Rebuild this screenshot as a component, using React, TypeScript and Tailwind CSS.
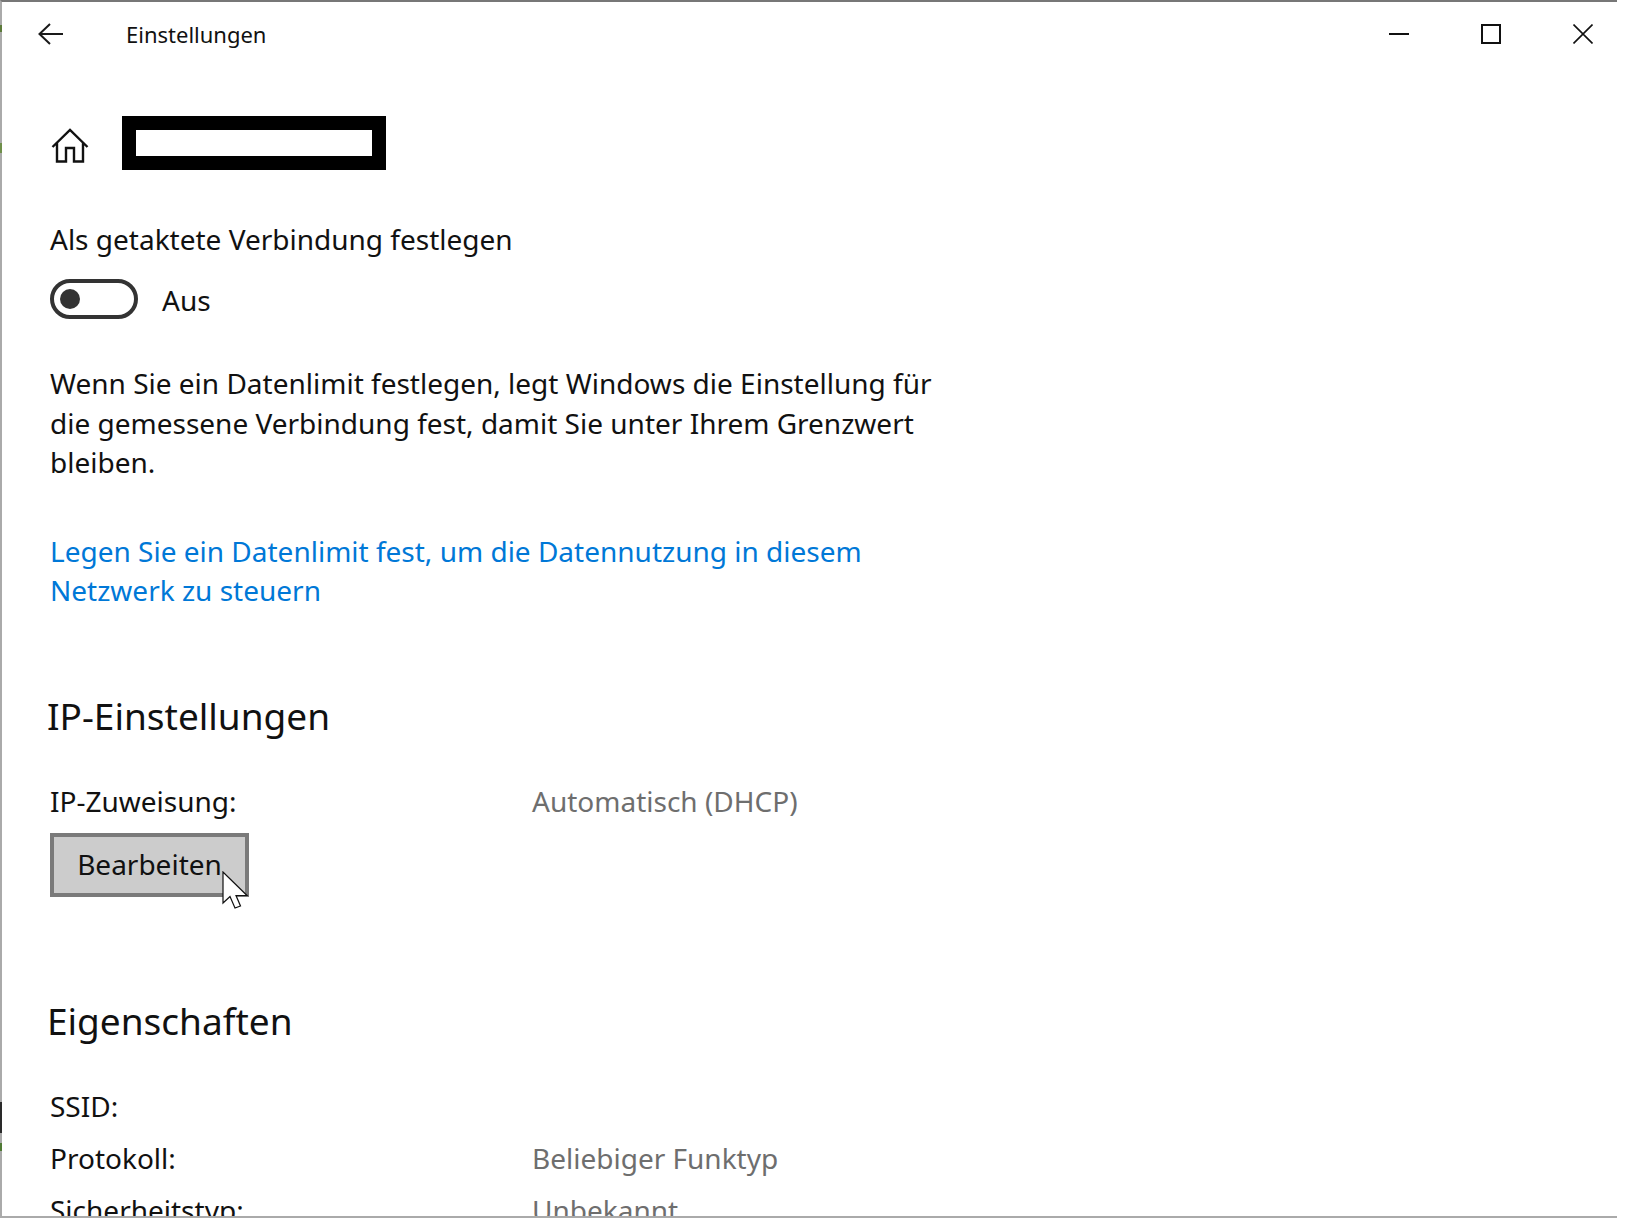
const BODY = "text-[28px] leading-[39.5px]";

function TitleBar() {
  return (
    <div className="flex h-[64px] shrink-0 items-center justify-between">
      <div className="flex items-center">
        <svg width="28" height="24" viewBox="0 0 28 24" className="ml-[35px]" fill="none" stroke="#1a1a1a" strokeWidth="2">
          <path d="M26 12H3M13 2L2.5 12L13 22" />
        </svg>
        <span className="ml-[61px] text-[22px] leading-[32px] text-[#111]">Einstellungen</span>
      </div>
      <div className="flex items-center">
        <svg width="20" height="20" viewBox="0 0 20 20" fill="none" stroke="#111" strokeWidth="2">
          <path d="M0 10H20" />
        </svg>
        <svg width="20" height="20" viewBox="0 0 20 20" className="ml-[72px]" fill="none" stroke="#111" strokeWidth="2">
          <rect x="1" y="1" width="18" height="18" />
        </svg>
        <svg width="20" height="20" viewBox="0 0 20 20" className="ml-[72px] mr-[24px]" fill="none" stroke="#111" strokeWidth="1.6">
          <path d="M0.5 0.5L19.5 19.5M19.5 0.5L0.5 19.5" />
        </svg>
      </div>
    </div>
  );
}

function Row({ label, value }: { label: string; value?: string }) {
  return (
    <div className={`flex h-[52px] ${BODY}`}>
      <span className="w-[482px] text-[#111]">{label}</span>
      {value && <span className="text-[#6e6e6e]">{value}</span>}
    </div>
  );
}

export default function App() {
  return (
    <div className="relative flex h-[1218px] w-[1631px] overflow-hidden bg-white font-['Noto_Sans',sans-serif] text-black">
      <div className="flex h-full w-[1617px] flex-col overflow-hidden border-y-2 border-l-2 border-t-[#777777] border-b-[#aaaaaa] border-l-[#aaaaaa]">
        <TitleBar />
        <div className="flex-1 overflow-hidden pl-[48px]">
          <div className="ml-[1px] mt-[50px] flex items-center">
            <svg width="38" height="36" viewBox="0 0 38 36" fill="none" stroke="#111" strokeWidth="2.4" className="mt-[5px]">
              <path d="M1.5 19L19 2L36.5 19M6 15V33.5H15V20H23V33.5H32V15" />
            </svg>
            <div className="ml-[33px] h-[54px] w-[264px] border-[14px] border-black bg-white" />
          </div>

          <p className={`mt-[50px] ${BODY} text-[#111]`}>Als getaktete Verbindung festlegen</p>
          <div className="mt-[19px] flex items-center">
            <div className="flex h-[40px] w-[88px] items-center rounded-full border-[4px] border-[#333333] pl-[6px]">
              <div className="h-[20px] w-[20px] rounded-full bg-[#333333]" />
            </div>
            <span className={`ml-[24px] mt-[2px] ${BODY} text-[#111]`}>Aus</span>
          </div>

          <p className={`mt-[44px] w-[900px] ${BODY} text-[#111]`}>
            Wenn Sie ein Datenlimit festlegen, legt Windows die Einstellung für die gemessene Verbindung fest, damit Sie unter Ihrem Grenzwert bleiben.
          </p>

          <p className={`mt-[49px] w-[900px] ${BODY} text-[#0078d7]`}>
            Legen Sie ein Datenlimit fest, um die Datennutzung in diesem Netzwerk zu steuern
          </p>

          <h2 className="mt-[80px] -ml-[3px] text-[37px] leading-[50px] text-[#111]">IP-Einstellungen</h2>

          <div className={`mt-[41px] flex ${BODY}`}>
            <span className="w-[482px] text-[#111]">IP-Zuweisung:</span>
            <span className="text-[#6e6e6e]">Automatisch (DHCP)</span>
          </div>

          <div className="relative mt-[12px] w-[199px]">
            <button className={`h-[64px] w-[199px] border-[4px] border-[#7a7a7a] bg-[#cccccc] ${BODY} text-[#111]`}>
              Bearbeiten
            </button>
            <svg width="27" height="39" viewBox="0 0 27 39" className="absolute left-[172px] top-[38px]">
              <path d="M1 1V32L8 25.5L13 37L18.5 35L14 24.5H25Z" fill="white" stroke="#111" strokeWidth="1.2" />
            </svg>
          </div>

          <h2 className="mt-[99px] -ml-[3px] text-[37px] leading-[50px] text-[#111]">Eigenschaften</h2>

          <div className="mt-[41px]">
            <Row label="SSID:" />
            <Row label="Protokoll:" value="Beliebiger Funktyp" />
            <Row label="Sicherheitstyp:" value="Unbekannt" />
          </div>
        </div>
      </div>

      {/* wallpaper showing through at the window's left edge */}
      <div className="absolute left-0 top-[25px] h-[7px] w-[2px] bg-[#5c7a3a]" />
      <div className="absolute left-0 top-[143px] h-[10px] w-[2px] bg-[#6f8f4a]" />
      <div className="absolute left-0 top-[1102px] h-[31px] w-[2px] bg-[#2a2a2a]" />
      <div className="absolute left-0 top-[1143px] h-[8px] w-[2px] bg-[#4f7a35]" />
    </div>
  );
}
